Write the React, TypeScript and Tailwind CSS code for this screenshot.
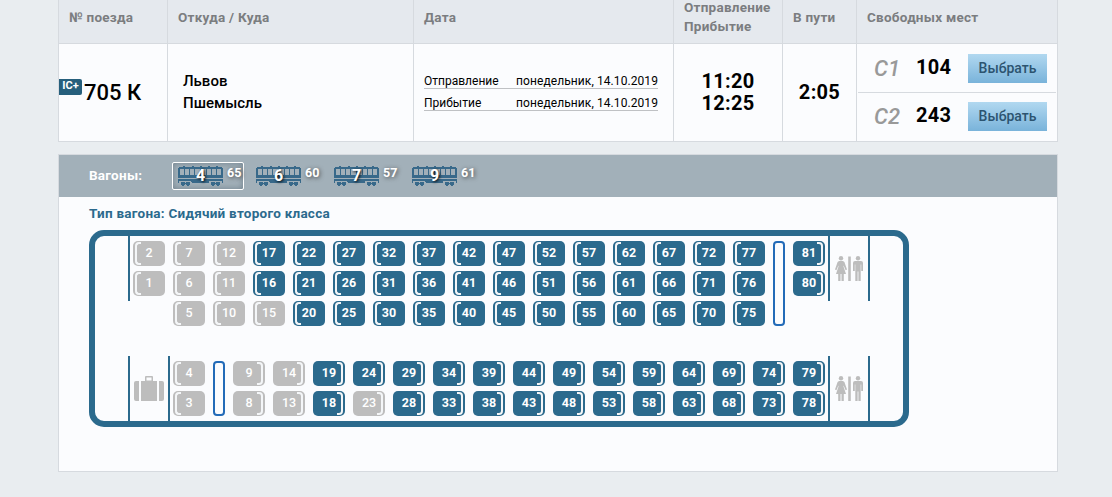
import type { ReactNode } from "react";

const wagons = [
  { num: 4, free: 65 },
  { num: 6, free: 60 },
  { num: 7, free: 57 },
  { num: 9, free: 61 },
];

const places = [
  { type: "С1", count: 104 },
  { type: "С2", count: 243 },
];

const upper = [
  [2, 1], [7, 6, 5], [12, 11, 10], [17, 16, 15], [22, 21, 20], [27, 26, 25],
  [32, 31, 30], [37, 36, 35], [42, 41, 40], [47, 46, 45], [52, 51, 50], [57, 56, 55],
  [62, 61, 60], [67, 66, 65], [72, 71, 70], [77, 76, 75],
];

const lower = [
  [9, 8], [14, 13], [19, 18], [24, 23], [29, 28], [34, 33], [39, 38], [44, 43],
  [49, 48], [54, 53], [59, 58], [64, 63], [69, 68], [74, 73], [79, 78],
];

const taken = [1, 2, 3, 4, 5, 6, 7, 8, 9, 10, 11, 12, 13, 14, 15, 23];

function Th({ children, className }: { children: ReactNode; className: string }) {
  return (
    <div className={`flex items-center border-r border-[#d6dadf] pb-[9px] pl-[10px] text-[13.5px] leading-[19px] font-bold tracking-[0.25px] text-[#7b7d80] ${className}`}>
      {children}
    </div>
  );
}

function Seat({ n, back }: { n: number; back: "left" | "right" }) {
  const busy = taken.includes(n);
  return (
    <div
      className={`relative flex h-[25px] w-8 items-center justify-center rounded-[5px] pb-px text-[12.5px] leading-none text-white ${
        busy ? "bg-[#bdbdbd] font-medium" : "bg-[#2b6a8d] font-bold"
      }`}
    >
      <span
        className={`absolute top-px h-[23px] w-[6px] border-y-2 border-[#f4f6f8] ${
          back === "left" ? "left-[2px] rounded-l-[4px] border-l-2" : "right-[2px] rounded-r-[4px] border-r-2"
        }`}
      />
      {n}
    </div>
  );
}

function SeatColumn({ seats, back }: { seats: number[]; back: "left" | "right" }) {
  return (
    <div className="flex flex-col gap-[5px]">
      {seats.map((n) => (
        <Seat key={n} n={n} back={back} />
      ))}
    </div>
  );
}

function Wall() {
  return <div className="h-[65px] w-[2px] shrink-0 bg-[#2b6a8d]" />;
}

function Train() {
  return (
    <svg width="45" height="20" viewBox="0 0 45 20" fill="#38698a" shapeRendering="crispEdges">
      <path d="M5 0h2v1h-2zM14 0h2v1h-2zM22 0h2v1h-2zM30 0h2v1h-2zM38 0h2v1h-2z" />
      <path
        fillRule="evenodd"
        d="M1 1h43v1h1v10h-45v-10h1zM2 3v6h4v-6zM7 3v6h4v-6zM12 3v6h4v-6zM17 3v6h5v-6zM23 3v6h5v-6zM29 3v6h4v-6zM34 3v6h4v-6zM39 3v6h4v-6z"
      />
      <path d="M0 13h45v4h-1v-2h-30v1h-1v-1h-12v2h-1z" />
      <path d="M14 15h17v2h-17z" />
      <path d="M3 16h4v1h1v-1h4v3h-1v1h-2v-1h-1v-1h-1v1h-1v1h-2v-1h-1zM33 16h4v1h1v-1h4v3h-1v1h-2v-1h-1v-1h-1v1h-1v1h-2v-1h-1z" />
    </svg>
  );
}

function Toilet() {
  return (
    <svg width="28" height="25" viewBox="0 0 28 25" fill="#bdbdbd">
      <circle cx="6" cy="2.2" r="2.2" />
      <path d="M4 5h4l1.4 1 2.6 7.5-1.4.8L8.600 9.500 8.500 10.500 11 18H8.800v7H6.500v-7h-1v7H3.200v-7H1l2.500-7.500-.1-1L1.400 14.300 0 13.500 2.600 6z" />
      <rect x="13.200" y="0.500" width="2.600" height="24.500" />
      <circle cx="23" cy="2.200" r="2.200" />
      <path d="M20 5h6q2 0 2 2v8h-1.800V8.500h-.5V25h-2.300V15.500h-.8V25h-2.300V8.500h-.5V15H18V7q0-2 2-2z" />
    </svg>
  );
}

function Suitcase() {
  return (
    <svg width="30" height="25" viewBox="0 0 30 25" fill="#bdbdbd">
      <path fillRule="evenodd" d="M12 0h6q1 0 1 1v4h-8v-4q0-1 1-1zM12.500 1.500v3h5v-3z" />
      <path d="M2 5h3v20h-3q-2 0-2-2V7q0-2 2-2zM7 5h16v20H7zM25 5h3q2 0 2 2v16q0 2-2 2h-3z" />
    </svg>
  );
}

export default function App() {
  return (
    <div className="h-[497px] overflow-hidden bg-[#e9edf0] pl-[58px] font-[Roboto,sans-serif]">
      {/* Train table */}
      <div className="w-[1000px] border-b border-l border-[#d6dadf]">
        <div className="flex h-11 border-b border-[#d6dadf] bg-[#e5e9ee]">
          <Th className="w-[109px]">№ поезда</Th>
          <Th className="w-[246px]">Откуда / Куда</Th>
          <Th className="w-[260px]">Дата</Th>
          <Th className="w-[109px]">
            <span>
              Отправление
              <br />
              Прибытие
            </span>
          </Th>
          <Th className="w-[74px]">В пути</Th>
          <Th className="w-[201px]">Свободных мест</Th>
        </div>
        <div className="flex h-[97px] bg-[#fbfcfe] text-black">
          <div className="flex w-[109px] items-center border-r border-[#d6dadf]">
            <span className="mb-[11px] flex h-4 w-[23px] items-center justify-center rounded-r-[2px] bg-[#265f7c] pb-px text-[11px] font-bold text-white">
              IC+
            </span>
            <span className="ml-[2px] text-[22px] font-medium">705 К</span>
          </div>
          <div className="flex w-[246px] flex-col justify-center border-r border-[#d6dadf] pb-[2px] pl-[15px] text-[15px] leading-[22px] font-medium">
            <span>Львов</span>
            <span>Пшемысль</span>
          </div>
          <div className="flex w-[260px] flex-col justify-center gap-[6px] border-r border-[#d6dadf] pr-[15px] pb-[2px] pl-[10px] text-[12px] leading-[14px]">
            <div className="flex h-4 items-end justify-between border-b border-[#bfc1c4]">
              <span>Отправление</span>
              <span className="tracking-[0.08px]">понедельник, 14.10.2019</span>
            </div>
            <div className="flex h-4 items-end justify-between border-b border-[#bfc1c4]">
              <span>Прибытие</span>
              <span className="tracking-[0.08px]">понедельник, 14.10.2019</span>
            </div>
          </div>
          <div className="flex w-[109px] flex-col items-center justify-center border-r border-[#d6dadf] pb-[2px] text-[20px] leading-[22px] font-bold tracking-[0.3px]">
            <span>11:20</span>
            <span>12:25</span>
          </div>
          <div className="flex w-[74px] items-center justify-center border-r border-[#d6dadf] pb-[2px] text-[20px] font-bold tracking-[0.3px]">
            2:05
          </div>
          <div className="flex w-[201px] flex-col border-r border-[#d6dadf] px-px pt-px">
            {places.map((p) => (
              <div key={p.type} className="flex h-12 items-center border-b border-[#d6dadf] pl-4 last:h-[47px] last:border-b-0">
                <span className="w-[42px] text-[22px] font-medium text-[#999] italic">{p.type}</span>
                <span className="w-[52px] pb-[3px] text-[20px] font-bold tracking-[0.3px]">{p.count}</span>
                <button className="h-[29px] w-[79px] bg-linear-to-b from-[#b1d8f0] to-[#79b3da] text-[14px] font-medium text-[#2c5470]">
                  Выбрать
                </button>
              </div>
            ))}
          </div>
        </div>
      </div>

      {/* Wagons */}
      <div className="mt-3 h-[318px] w-[1000px] border border-[#d6dadf] bg-[#fbfcfe]">
        <div className="flex h-[42px] items-center bg-[#a2b0b9] pl-[30px] text-white">
          <span className="w-[83px] pb-[2px] text-[13.5px] font-bold tracking-[0.25px]">Вагоны:</span>
          <div className="flex gap-[6px]">
            {wagons.map((w, i) => (
              <div
                key={w.num}
                className={`flex h-7 w-[72px] rounded-[2px] border pt-[3px] pl-[5px] ${
                  i === 0 ? "border-white shadow-[inset_0_0_6px_rgba(60,80,95,0.5)]" : "border-transparent"
                }`}
              >
                <div className="relative h-5 w-[45px]">
                  <Train />
                  <span className="absolute inset-0 flex items-center justify-center text-[16px] font-bold [text-shadow:1px_1px_3px_#000]">
                    {w.num}
                  </span>
                </div>
                <span className="ml-1 text-[12.5px] leading-[14px] font-bold [text-shadow:1px_1px_4px_#444]">{w.free}</span>
              </div>
            ))}
          </div>
        </div>

        <div className="pt-[7px] pl-[30px]">
          <h3 className="h-[26px] text-[13.5px] leading-[19px] font-bold tracking-[0.25px] text-[#2b6a8d]">Тип вагона: Сидячий второго класса</h3>
          <div className="flex h-[197px] w-[820px] flex-col justify-between rounded-[15px] border-[6px] border-[#2b6a8d] pl-[33px]">
            <div className="flex">
              <Wall />
              <div className="flex gap-2 px-[3px] pt-[5px]">
                {upper.map((c) => (
                  <SeatColumn key={c[0]} seats={c} back="left" />
                ))}
                <div className="h-[85px] w-3 rounded-[4px] border-2 border-[#236bb8]" />
                <SeatColumn seats={[81, 80]} back="right" />
              </div>
              <Wall />
              <div className="flex h-[65px] w-[38px] items-center justify-center">
                <Toilet />
              </div>
              <Wall />
            </div>
            <div className="flex">
              <Wall />
              <div className="flex h-[65px] w-[38px] items-center justify-center">
                <Suitcase />
              </div>
              <Wall />
              <div className="flex gap-2 px-[3px] py-[5px]">
                <SeatColumn seats={[4, 3]} back="left" />
                <div className="h-[55px] w-3 rounded-[4px] border-2 border-[#236bb8]" />
                {lower.map((c) => (
                  <SeatColumn key={c[0]} seats={c} back="right" />
                ))}
              </div>
              <Wall />
              <div className="flex h-[65px] w-[38px] items-center justify-center">
                <Toilet />
              </div>
              <Wall />
            </div>
          </div>
        </div>
      </div>
    </div>
  );
}
